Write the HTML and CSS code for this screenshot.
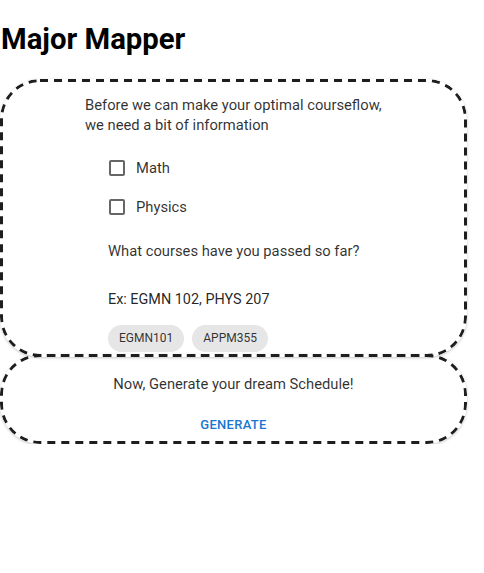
FILE: index.html
```html
<!DOCTYPE html>
<html>
<head>
<meta charset="utf-8">
<link rel="stylesheet" href="styles.css">
</head>
<body>
<h1 class="title">Major Mapper</h1>
<div class="card card-info">
  <p class="intro">Before we can make your optimal courseflow,<br>we need a bit of information</p>
  <div class="fields">
    <label class="check-row"><span class="check-box"></span><span class="check-label">Math</span></label>
    <label class="check-row"><span class="check-box"></span><span class="check-label">Physics</span></label>
    <p class="question">What courses have you passed so far?</p>
    <p class="example">Ex: EGMN 102, PHYS 207</p>
    <div class="chips">
      <span class="chip">EGMN101</span>
      <span class="chip">APPM355</span>
    </div>
  </div>
</div>
<div class="card card-generate">
  <p class="cta">Now, Generate your dream Schedule!</p>
  <button class="generate">GENERATE</button>
</div>
</body>
</html>
```
FILE: styles.css
```css
* { box-sizing: border-box; }
body {
  margin: 0;
  font-family: Roboto, "Liberation Sans", sans-serif;
  color: rgba(0,0,0,0.82);
  background: #fff;
}
.title {
  margin: 22px 0 22px 1px;
  font-size: 29.3px;
  line-height: 35px;
  font-weight: 700;
  color: #000;
}
.card {
  width: 467px;
  border: 3px solid transparent;
  border-radius: 40px;
  box-shadow: 0 1px 3px rgba(0,0,0,0.22);
  background-repeat: no-repeat;
  background-origin: border-box;
  background-position: 0 0;
}
.card-info {
  height: 278px;
  padding: 13px 0 2px 82px;
  background-image: url("data:image/svg+xml,%3Csvg xmlns='http://www.w3.org/2000/svg' width='467' height='278'%3E%3Crect x='1.5' y='1.5' width='464' height='275' rx='38.5' fill='none' stroke='%231e1e1e' stroke-width='3' stroke-dasharray='8 6'/%3E%3C/svg%3E");
}
.intro {
  margin: 0;
  font-size: 14.75px;
  line-height: 20px;
}
.fields {
  margin-left: 23px;
  padding-top: 13px;
  display: flex;
  flex-direction: column;
}
.check-row {
  height: 39px;
  display: flex;
  align-items: center;
}
.check-box {
  width: 16px;
  height: 16px;
  margin-left: 1px;
  border: 2px solid #666;
  border-radius: 2px;
}
.check-label {
  margin-left: 11px;
  font-size: 14.75px;
}
.question {
  margin: 15px 0 0;
  font-size: 14.75px;
  line-height: 20px;
}
.example {
  margin: 29px 0 0;
  font-size: 14.4px;
  line-height: 20px;
  color: rgba(0,0,0,0.87);
}
.chips {
  margin-top: 15px;
  display: flex;
  gap: 8px;
}
.chip {
  height: 27px;
  padding: 0 11px;
  border-radius: 14px;
  background: #e6e6e6;
  font-size: 12px;
  line-height: 27px;
  color: rgba(0,0,0,0.8);
}
.card-generate {
  height: 90px;
  margin-top: -3px;
  padding: 17px 0 6px;
  display: flex;
  flex-direction: column;
  align-items: center;
  background-image: url("data:image/svg+xml,%3Csvg xmlns='http://www.w3.org/2000/svg' width='467' height='90'%3E%3Crect x='1.5' y='1.5' width='464' height='87' rx='38.5' fill='none' stroke='%231e1e1e' stroke-width='3' stroke-dasharray='8 6' stroke-dashoffset='6.55'/%3E%3C/svg%3E");
}
.cta {
  margin: 0;
  font-size: 14.75px;
  line-height: 20px;
}
.generate {
  margin-top: 21px;
  border: 0;
  background: none;
  padding: 0;
  font-family: Roboto, "Liberation Sans", sans-serif;
  font-size: 13px;
  line-height: 20px;
  font-weight: 500;
  letter-spacing: 0.3px;
  color: #1976d2;
}
```
